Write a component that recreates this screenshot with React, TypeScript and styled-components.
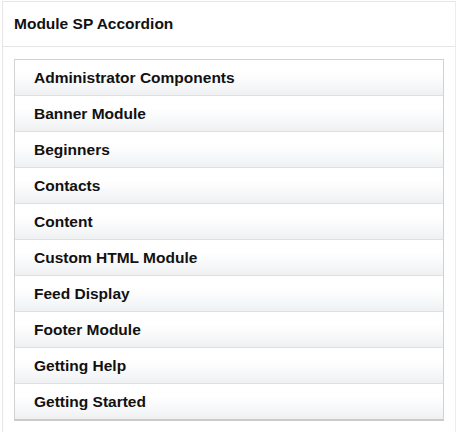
import styled, { createGlobalStyle } from 'styled-components';

const GlobalStyle = createGlobalStyle`
  body {
    margin: 0;
    background: #fff;
    font-family: "Liberation Sans", Arial, sans-serif;
  }
`;

const Panel = styled.div`
  margin: 1px 0 0 2px;
  border-top: 1px solid #e6e6e6;
  border-left: 1px solid #e6e6e6;
  border-right: 1px solid #ececec;
  min-height: 431px;
  box-sizing: border-box;
`;

const PanelTitle = styled.h3`
  margin: 0;
  height: 44px;
  padding-left: 11px;
  display: flex;
  align-items: center;
  font-size: 15.5px;
  font-weight: bold;
  color: #111;
  border-bottom: 1px solid #e6e6e6;
`;

const Accordion = styled.ul`
  list-style: none;
  margin: 12px 0 0 11px;
  padding: 0;
  width: 430px;
  box-sizing: border-box;
  border: 1px solid #d2d2d2;
  border-bottom: 2px solid #cbcbcb;
`;

const Item = styled.li<{ $last?: boolean }>`
  height: 35px;
  padding-left: 19px;
  display: flex;
  align-items: center;
  font-size: 15.5px;
  font-weight: bold;
  color: #111;
  background: linear-gradient(to bottom, #ffffff 0%, #ffffff 35%, #f7f8f9 70%, #eef0f2 100%);
  border-bottom: ${({ $last }) => ($last ? 'none' : '1px solid #dfe0e2')};
  cursor: pointer;
`;

const items = [
  'Administrator Components',
  'Banner Module',
  'Beginners',
  'Contacts',
  'Content',
  'Custom HTML Module',
  'Feed Display',
  'Footer Module',
  'Getting Help',
  'Getting Started',
];

export default function App() {
  return (
    <>
      <GlobalStyle />
      <Panel>
        <PanelTitle>Module SP Accordion</PanelTitle>
        <Accordion>
          {items.map((label, i) => (
            <Item key={label} $last={i === items.length - 1}>
              {label}
            </Item>
          ))}
        </Accordion>
      </Panel>
    </>
  );
}
